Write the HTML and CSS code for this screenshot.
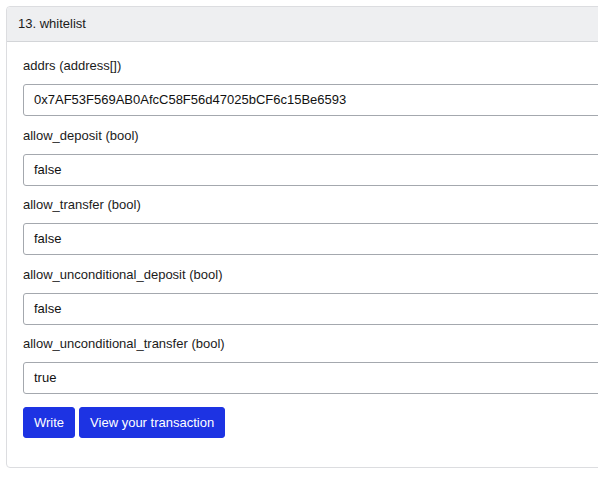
FILE: index.html
```html
<!DOCTYPE html>
<html>
<head>
<meta charset="utf-8">
<link rel="stylesheet" href="styles.css">
</head>
<body>
<div class="card">
  <div class="card-header">13. whitelist</div>
  <div class="card-body">
    <div class="field">
      <label class="label">addrs (address[])</label>
      <div class="input">0x7AF53F569AB0AfcC58F56d47025bCF6c15Be6593</div>
    </div>
    <div class="field">
      <label class="label">allow_deposit (bool)</label>
      <div class="input">false</div>
    </div>
    <div class="field">
      <label class="label">allow_transfer (bool)</label>
      <div class="input">false</div>
    </div>
    <div class="field">
      <label class="label">allow_unconditional_deposit (bool)</label>
      <div class="input">false</div>
    </div>
    <div class="field">
      <label class="label">allow_unconditional_transfer (bool)</label>
      <div class="input">true</div>
    </div>
    <div class="actions">
      <button class="btn">Write</button>
      <button class="btn">View your transaction</button>
    </div>
  </div>
</div>
</body>
</html>
```
FILE: styles.css
```css
html, body {
  margin: 0;
  padding: 0;
  background: #fff;
  overflow: hidden;
}
body {
  font-family: "Liberation Sans", Arial, sans-serif;
  font-size: 13px;
  color: #212529;
}
.card {
  margin: 6px 0 0 6px;
  width: 640px;
  border: 1px solid #dcdde0;
  border-radius: 4px;
  box-sizing: border-box;
}
.card-header {
  background: #eeeff1;
  border-bottom: 1px solid #d3d5d8;
  height: 34px;
  line-height: 34px;
  padding: 0 11px;
  color: #1b1b1b;
  border-radius: 4px 4px 0 0;
}
.card-body {
  padding: 16px 16px 29px 16px;
}
.field {
  margin-bottom: 11.5px;
}
.label {
  display: block;
  line-height: 15px;
  margin-bottom: 11px;
  color: #1b1b1b;
}
.input {
  height: 32px;
  box-sizing: border-box;
  border: 1px solid #a4a8ae;
  border-radius: 3px;
  padding: 0 10px;
  line-height: 30px;
  color: #111;
}
.actions {
  display: flex;
  gap: 4px;
  padding-top: 1px;
}
.btn {
  font-family: "Liberation Sans", Arial, sans-serif;
  font-size: 13px;
  color: #fff;
  background: #1d33e3;
  border: 1px solid #1d33e3;
  border-radius: 3px;
  height: 31px;
  padding: 0 10px;
}
```
